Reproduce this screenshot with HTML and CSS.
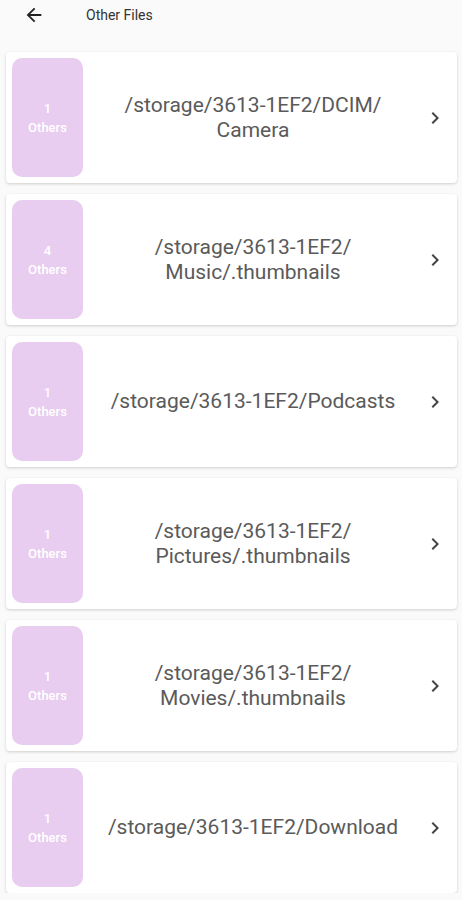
FILE: index.html
```html
<!DOCTYPE html>
<html lang="en">
<head>
    <meta charset="UTF-8">
    <meta name="viewport" content="width=device-width, initial-scale=1.0">
    <title>Other Files</title>
    <link rel="stylesheet" href="styles.css">
</head>
<body>
    <header class="top-bar">
        <span class="back-button">
            <svg width="22" height="22" viewBox="0 0 24 24"><path d="M20 11H7.83l5.59-5.59L12 4l-8 8 8 8 1.41-1.41L7.83 13H20v-2z" fill="#222"/></svg>
        </span>
        <h1 class="title">Other Files</h1>
    </header>
    <div class="folder-list">
        <div class="folder-card">
            <div class="badge"><span>1</span><span>Others</span></div>
            <div class="folder-path">/storage/3613-1EF2/DCIM/<br>Camera</div>
            <svg class="chevron" width="24" height="24" viewBox="0 0 24 24"><path d="M10 6L8.59 7.41 13.17 12l-4.58 4.59L10 18l6-6z" fill="#444"/></svg>
        </div>
        <div class="folder-card">
            <div class="badge"><span>4</span><span>Others</span></div>
            <div class="folder-path">/storage/3613-1EF2/<br>Music/.thumbnails</div>
            <svg class="chevron" width="24" height="24" viewBox="0 0 24 24"><path d="M10 6L8.59 7.41 13.17 12l-4.58 4.59L10 18l6-6z" fill="#444"/></svg>
        </div>
        <div class="folder-card">
            <div class="badge"><span>1</span><span>Others</span></div>
            <div class="folder-path">/storage/3613-1EF2/Podcasts</div>
            <svg class="chevron" width="24" height="24" viewBox="0 0 24 24"><path d="M10 6L8.59 7.41 13.17 12l-4.58 4.59L10 18l6-6z" fill="#444"/></svg>
        </div>
        <div class="folder-card">
            <div class="badge"><span>1</span><span>Others</span></div>
            <div class="folder-path">/storage/3613-1EF2/<br>Pictures/.thumbnails</div>
            <svg class="chevron" width="24" height="24" viewBox="0 0 24 24"><path d="M10 6L8.59 7.41 13.17 12l-4.58 4.59L10 18l6-6z" fill="#444"/></svg>
        </div>
        <div class="folder-card">
            <div class="badge"><span>1</span><span>Others</span></div>
            <div class="folder-path">/storage/3613-1EF2/<br>Movies/.thumbnails</div>
            <svg class="chevron" width="24" height="24" viewBox="0 0 24 24"><path d="M10 6L8.59 7.41 13.17 12l-4.58 4.59L10 18l6-6z" fill="#444"/></svg>
        </div>
        <div class="folder-card">
            <div class="badge"><span>1</span><span>Others</span></div>
            <div class="folder-path">/storage/3613-1EF2/Download</div>
            <svg class="chevron" width="24" height="24" viewBox="0 0 24 24"><path d="M10 6L8.59 7.41 13.17 12l-4.58 4.59L10 18l6-6z" fill="#444"/></svg>
        </div>
    </div>
</body>
</html>
```

FILE: styles.css
```css
body {
    margin: 0;
    padding: 0;
    background-color: #fafafa;
    font-family: Roboto, "Noto Sans", sans-serif;
}
.top-bar {
    display: flex;
    align-items: center;
    height: 29px;
    padding-left: 23px;
}
.back-button {
    display: flex;
    width: 22px;
    height: 22px;
}
.title {
    margin: 0 0 0 41px;
    font-size: 14px;
    font-weight: 400;
    color: #333;
}
.folder-list {
    display: flex;
    flex-direction: column;
    gap: 11px;
    padding: 23px 5px 0 6px;
}
.folder-card {
    display: flex;
    align-items: center;
    height: 131px;
    padding: 6px;
    box-sizing: border-box;
    background-color: #fff;
    border-radius: 4px;
    box-shadow: 0 1px 3px rgba(0, 0, 0, 0.18);
}
.badge {
    display: flex;
    flex-direction: column;
    justify-content: center;
    align-items: center;
    width: 71px;
    height: 119px;
    flex-shrink: 0;
    border-radius: 10px;
    background-color: #e8cdf0;
    color: #fff;
    font-size: 13px;
    font-weight: 500;
    line-height: 19px;
}
.folder-path {
    flex: 1;
    text-align: center;
    font-size: 21px;
    line-height: 25px;
    color: #5a5a5a;
}
.chevron {
    margin-right: 4px;
    flex-shrink: 0;
}
```
